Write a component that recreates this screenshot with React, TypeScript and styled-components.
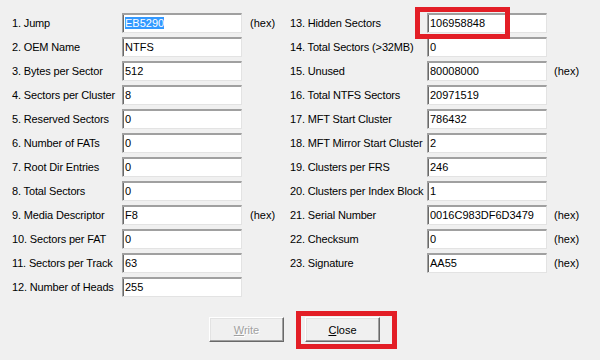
import { createGlobalStyle } from "styled-components";
import styled from "styled-components";

const GlobalStyle = createGlobalStyle`
  html, body {
    margin: 0;
    padding: 0;
    background: #f0f0f0;
  }
  body {
    font-family: "Liberation Sans", Arial, sans-serif;
    font-size: 11px;
    color: #000;
  }
`;

const Dialog = styled.div`
  position: relative;
  width: 600px;
  height: 360px;
  box-sizing: border-box;
  padding: 13px 0 0 12px;
  background: #f0f0f0;
`;

const Columns = styled.div`
  display: flex;
`;

const FieldColumn = styled.div<{ labelWidth: number; hexWidth: number }>`
  display: grid;
  grid-template-columns: ${({ labelWidth }) => labelWidth}px 120px ${({ hexWidth }) => hexWidth}px;
  grid-auto-rows: 20px;
  row-gap: 4px;
  align-items: center;
`;

const Label = styled.span`
  white-space: nowrap;
  line-height: 20px;
  letter-spacing: -0.15px;
`;

const Field = styled.div`
  height: 20px;
  box-sizing: border-box;
  background: #fff;
  border-top: 2px solid #a0a0a0;
  border-left: 1px solid #a0a0a0;
  border-bottom: 1px solid #e3e3e3;
  border-right: 1px solid #e3e3e3;
  box-shadow: inset 1px 0 0 #696969;
  padding: 1px 0 0 2px;
  line-height: 15px;
  white-space: nowrap;
  overflow: hidden;
`;

const Selected = styled.span`
  background: #3399ff;
  color: #fff;
`;

const Hex = styled.span<{ indent: number }>`
  padding-left: ${({ indent }) => indent}px;
  line-height: 20px;
`;

const ButtonRow = styled.div`
  display: flex;
  gap: 21px;
  margin-top: 20px;
  padding-left: 197px;
`;

const Button = styled.button<{ disabled?: boolean }>`
  width: 75px;
  height: 25px;
  padding: 0;
  background: #f0f0f0;
  border: 1px solid;
  border-color: #fff #696969 #696969 #fff;
  box-shadow: inset -1px -1px 0 #a0a0a0, inset 1px 1px 0 #e3e3e3;
  font-family: "Liberation Sans", Arial, sans-serif;
  font-size: 11px;
  color: ${({ disabled }) => (disabled ? "#a0a0a0" : "#000")};
  text-shadow: ${({ disabled }) => (disabled ? "1px 1px 0 #fff" : "none")};
  u {
    text-decoration: underline;
  }
`;

const Highlight = styled.div<{ x: number; y: number; w: number; h: number }>`
  position: absolute;
  left: ${({ x }) => x}px;
  top: ${({ y }) => y}px;
  width: ${({ w }) => w}px;
  height: ${({ h }) => h}px;
  box-sizing: border-box;
  border: 5px solid #e31e26;
  pointer-events: none;
`;

interface Entry {
  label: string;
  value: string;
  hex?: boolean;
}

const left: Entry[] = [
  { label: "1. Jump", value: "EB5290", hex: true },
  { label: "2. OEM Name", value: "NTFS" },
  { label: "3. Bytes per Sector", value: "512" },
  { label: "4. Sectors per Cluster", value: "8" },
  { label: "5. Reserved Sectors", value: "0" },
  { label: "6. Number of FATs", value: "0" },
  { label: "7. Root Dir Entries", value: "0" },
  { label: "8. Total Sectors", value: "0" },
  { label: "9. Media Descriptor", value: "F8", hex: true },
  { label: "10. Sectors per FAT", value: "0" },
  { label: "11. Sectors per Track", value: "63" },
  { label: "12. Number of Heads", value: "255" },
];

const right: Entry[] = [
  { label: "13. Hidden Sectors", value: "106958848" },
  { label: "14. Total Sectors (>32MB)", value: "0" },
  { label: "15. Unused", value: "80008000", hex: true },
  { label: "16. Total NTFS Sectors", value: "20971519" },
  { label: "17. MFT Start Cluster", value: "786432" },
  { label: "18. MFT Mirror Start Cluster", value: "2" },
  { label: "19. Clusters per FRS", value: "246" },
  { label: "20. Clusters per Index Block", value: "1" },
  { label: "21. Serial Number", value: "0016C983DF6D3479", hex: true },
  { label: "22. Checksum", value: "0", hex: true },
  { label: "23. Signature", value: "AA55", hex: true },
];

const renderRows = (entries: Entry[], indent: number, selectFirst = false) =>
  entries.map((e, i) => [
    <Label key={e.label}>{e.label}</Label>,
    <Field key={e.label + "-v"}>
      {selectFirst && i === 0 ? <Selected>{e.value}</Selected> : e.value}
    </Field>,
    <Hex key={e.label + "-h"} indent={indent}>
      {e.hex ? "(hex)" : ""}
    </Hex>,
  ]);

export default function App() {
  return (
    <>
      <GlobalStyle />
      <Dialog>
        <Columns>
          <FieldColumn labelWidth={110} hexWidth={48}>
            {renderRows(left, 8, true)}
          </FieldColumn>
          <FieldColumn labelWidth={137} hexWidth={50}>
            {renderRows(right, 7)}
          </FieldColumn>
        </Columns>
        <ButtonRow>
          <Button disabled>
            <u>W</u>rite
          </Button>
          <Button>
            <u>C</u>lose
          </Button>
        </ButtonRow>
        <Highlight x={415} y={7} w={95} h={32} />
        <Highlight x={296} y={311} w={101} h={38} />
      </Dialog>
    </>
  );
}
